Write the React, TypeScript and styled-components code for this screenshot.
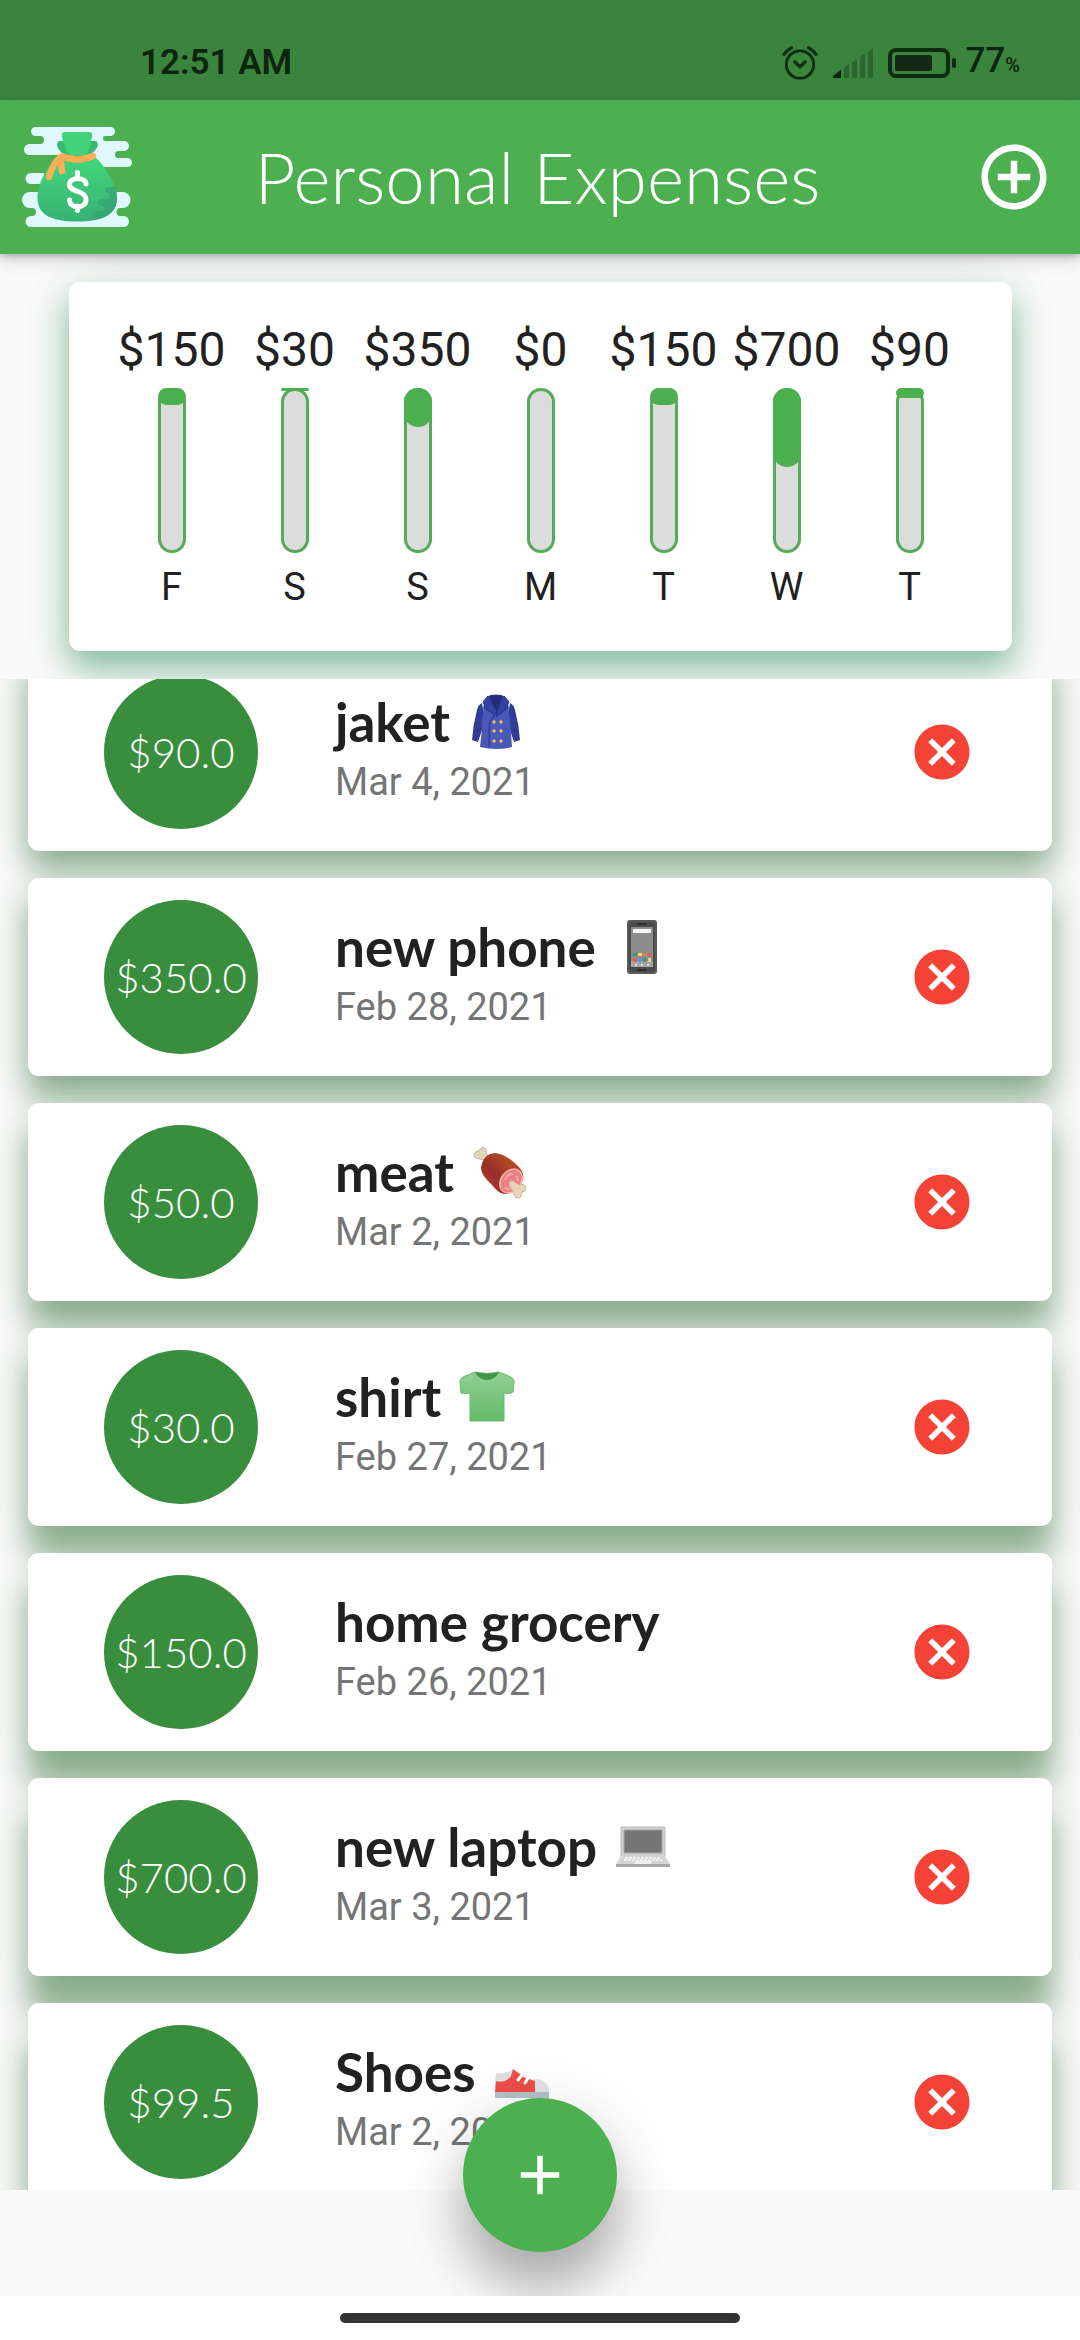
import React, { useLayoutEffect, useRef } from 'react';
import styled, { createGlobalStyle } from 'styled-components';
import { MdAdd, MdAddCircleOutline, MdCancel } from 'react-icons/md';

const GlobalStyle = createGlobalStyle`
  * { box-sizing: border-box; }
  body { margin: 0; background: #ffffff; }
  button { font: inherit; border: 0; padding: 0; cursor: pointer; }
`;

const rounded = "Lato, 'Open Sans', sans-serif";
const plain = "Roboto, 'Noto Sans', sans-serif";

const Screen = styled.div`
  display: flex;
  flex-direction: column;
  height: 100vh;
  overflow: hidden;
  font-family: ${plain};
  color: #212121;
`;

const StatusBar = styled.div`
  display: flex;
  align-items: center;
  flex: none;
  height: 100px;
  padding: 26px 60px 0 140px;
  background: #3b843d;
  color: #0d250f;
  font-size: 35px;
  line-height: 40px;
`;

const Clock = styled.time`
  margin-right: auto;
  font-weight: 600;
`;

const StatusIcons = styled.div`
  display: flex;
  align-items: center;
  gap: 14px;
  margin-right: 7px;
`;

const BatteryLevel = styled.span`
  font-weight: 500;
  small { font-size: 20px; }
`;

const AppBar = styled.header`
  position: relative;
  z-index: 1;
  display: grid;
  grid-template-columns: 1fr auto 1fr;
  align-items: center;
  flex: none;
  height: 154px;
  padding: 0 27px 0 22px;
  background: #4caf50;
  color: #ffffff;
  box-shadow: 0 8px 14px rgba(0, 0, 0, 0.14), 0 2px 6px rgba(0, 0, 0, 0.2);
`;

const AppTitle = styled.h1`
  margin: 0;
  font-family: ${rounded};
  font-size: 71px;
  line-height: 84px;
  font-weight: 300;
`;

const BarButton = styled.button`
  display: flex;
  justify-self: end;
  background: none;
  color: #ffffff;
`;

const Body = styled.main`
  position: relative;
  display: flex;
  flex-direction: column;
  flex: 1;
  min-height: 0;
  overflow: hidden;
  background: #fafafa;
`;

const ChartCard = styled.section`
  display: flex;
  flex: none;
  margin: 28px 68px 28px 69px;
  padding: 41px;
  border-radius: 11px;
  background: #ffffff;
  box-shadow: 0 18px 34px rgba(46, 139, 87, 0.5), 0 4px 44px rgba(46, 139, 87, 0.14);
`;

const Day = styled.div`
  display: flex;
  flex: 1 1 0;
  min-width: 0;
  flex-direction: column;
  align-items: center;
  gap: 11px;
`;

const DayTotal = styled.span`
  font-size: 48px;
  line-height: 54px;
`;

const Bar = styled.div`
  width: 28px;
  height: 165px;
  border-radius: 14px;
  background: #dcdcdc;
  box-shadow: inset 0 0 0 3px #55ab58;
`;

const BarFill = styled.div`
  border-radius: 14px;
  background: #4caf50;
`;

const DayName = styled.span`
  font-size: 38px;
  line-height: 46px;
`;

const Scroller = styled.div`
  flex: 1;
  min-height: 0;
  overflow-y: auto;
  scrollbar-width: none;
`;

const ExpenseList = styled.ul`
  display: flex;
  flex-direction: column;
  gap: 27px;
  margin: 0;
  padding: 14px 28px;
  list-style: none;
`;

const ExpenseCard = styled.li<{ $drop: number }>`
  display: flex;
  align-items: center;
  flex: none;
  height: 198px;
  padding: 0 44px 0 76px;
  border-radius: 11px;
  background: #ffffff;
  box-shadow: 0 ${(p) => p.$drop}px 32px rgba(27, 94, 32, 0.46), 0 4px 44px rgba(27, 94, 32, 0.1);
`;

const Amount = styled.div`
  display: flex;
  align-items: center;
  justify-content: center;
  flex: none;
  width: 154px;
  height: 154px;
  border-radius: 50%;
  background: #388e3c;
  color: #ffffff;
  font-family: ${rounded};
  font-size: 42px;
  font-weight: 300;
`;

const Details = styled.div`
  flex: 1;
  min-width: 0;
  margin-left: 77px;
  line-height: 60px;
`;

const Name = styled.h2`
  display: flex;
  align-items: center;
  gap: 17px;
  margin: 0;
  font-family: ${rounded};
  font-size: 53px;
  font-weight: 700;
`;

const DateText = styled.time`
  display: block;
  color: #757575;
  font-size: 38px;
`;

const DeleteButton = styled.button`
  display: flex;
  align-items: center;
  justify-content: center;
  width: 132px;
  height: 132px;
  background: none;
  color: #f44336;
`;

const Footer = styled.div`
  flex: none;
  height: 106px;
`;

const Fab = styled.button`
  position: absolute;
  bottom: 44px;
  left: calc(50% - 77px);
  display: flex;
  align-items: center;
  justify-content: center;
  width: 154px;
  height: 154px;
  border-radius: 50%;
  background: #4caf50;
  color: #ffffff;
  box-shadow: 0 38px 52px rgba(0, 0, 0, 0.27), 0 10px 80px rgba(0, 0, 0, 0.1);
`;

const NavBar = styled.div`
  display: flex;
  align-items: center;
  justify-content: center;
  flex: none;
  height: 44px;
  background: #ffffff;
`;

const NavHandle = styled.div`
  width: 400px;
  height: 10px;
  border-radius: 5px;
  background: #333333;
`;

const AlarmIcon = () => (
  <svg width="36" height="36" viewBox="0 0 36 36" fill="none" stroke="#0d2c10" strokeLinecap="round">
    <circle cx="18" cy="19.500" r="13.700" strokeWidth="2.800" />
    <path d="M2 9.200C4 6.500 6.500 4.300 9.500 2.600M34 9.200C32 6.500 29.500 4.300 26.500 2.600" strokeWidth="3.200" />
    <path d="M12.800 16.800L18 21.800L23.200 16.800" strokeWidth="3.200" strokeLinejoin="round" />
  </svg>
);

const SignalIcon = () => (
  <svg width="42" height="36" viewBox="0 0 42 36">
    <path d="M1 33V31L9 24.500V33Z" fill="#0d250f" />
    <path d="M12 33V22.500L17 19V33ZM20 33V17.500L25 14V33ZM28 33V12L33 8.500V33ZM36 33V7L41 3V33Z" fill="#2b672e" />
  </svg>
);

const BatteryIcon = () => (
  <svg width="70" height="36" viewBox="0 0 70 36">
    <rect x="2" y="5" width="58" height="26" rx="6" fill="none" stroke="#0d2c10" strokeWidth="4" />
    <rect x="7" y="10" width="37" height="16" rx="2" fill="#142815" />
    <rect x="64" y="13" width="4" height="10" rx="2" fill="#0d2c10" />
  </svg>
);

const MoneyBag = () => (
  <svg width="110" height="100" viewBox="22 127 110 100" role="img" aria-label="Money bag">
    <defs>
      <linearGradient id="bag" x1="0" y1="0" x2="0" y2="1">
        <stop offset="0" stopColor="#43d87b" />
        <stop offset="1" stopColor="#38b274" />
      </linearGradient>
    </defs>
    <g fill="#dff9ff">
      <path d="M35.500 127H110.500A4.500 4.500 0 0 1 110.500 136H105.500A2.500 2.500 0 0 0 105.500 141H124A5 5 0 0 1 124 151H118.500A3.500 3.500 0 0 0 118.500 158H127.500A4.500 4.500 0 0 1 127.500 167H60V155H29.500A5.500 5.500 0 0 1 29.500 144H40A4 4 0 0 0 40 136H35.500A4.500 4.500 0 0 1 35.500 127Z" />
      <path d="M31 173H60V184H31A5.500 5.500 0 0 1 31 173Z" />
      <path d="M30 192H122.500A8 8 0 0 1 122.500 208H120.500A4 4 0 0 0 120.500 216H123.500A5.500 5.500 0 0 1 123.500 227H31A5.500 5.500 0 0 1 31 216H32A4 4 0 0 0 32 208H30A8 8 0 0 1 30 192Z" />
    </g>
    <path d="M50 167V178H44V167Z" fill="#4caf50" />
    <path d="M62 154Q77 161 92 154C103 163 117 184 117 198C117 214 104 221.500 77 221.500C50 221.500 37.500 214 37.500 198C37.500 182 49 163 62 154Z" fill="url(#bag)" />
    <path d="M116 187H108A3 3 0 0 0 108 193H107A3 3 0 0 1 107 199H101A3 3 0 0 0 101 206H103A3 3 0 0 1 103 211H96C91 212 90 219 95 220C110 217 117 210 117 198Q117 193 116 187Z" fill="#36a573" opacity=".8" />
    <path d="M63 141H60C54 142 58 152 66 155Q77 159 88 155C97 152 101 142 95 141H91Z" fill="#36bb70" />
    <path d="M65 132H89Q93 132 92 137Q89 150 87 154Q77 157 68 154Q66 150 62 137Q61 132 65 132Z" fill="#43d47a" />
    <path d="M93 156Q77 163 62 156C54 162 51 169 49 177M61 158Q61 164 62 171" fill="none" stroke="#ffad57" strokeWidth="6.500" strokeLinecap="round" strokeLinejoin="round" />
    <path d="M86 184C86 176.500 69.500 176.500 69.500 184.500C69.500 193 86 189.500 86 200C86 209 69.500 209 69.500 200M77.500 172.500V178M77.500 206V210.500" fill="none" stroke="#ffffff" strokeWidth="5" strokeLinecap="round" />
  </svg>
);

const Coat = () => (
  <svg width="58" height="58" viewBox="0 0 58 58" role="img" aria-label="coat">
    <path d="M15 10Q11 12 10 17Q6 32 5 47L11 49L18 28ZM43 10Q47 12 48 17Q52 32 53 47L47 49L40 28Z" fill="#313c94" />
    <path d="M17 8L23 2Q29 1 35 2L41 8L43 28L45 54Q29 58 13 54Q15 40 15 28Z" fill="#4a59b5" />
    <path d="M22 3Q29 1 36 3L30 18Q25 12 22 3Z" fill="#202b7a" />
    <path d="M21 3L16 9L18 12L17 15L28 22L30 18Q25 13 21 3ZM37 3L42 9L40 12L41 15L29 24L30 17Q34 11 37 3Z" fill="#3542a0" stroke="#26328a" />
    <path d="M28 22Q22 28 22 35V54" fill="none" stroke="#303c98" strokeWidth="1.500" />
    <g fill="#f0bd63">
      <circle cx="27" cy="29" r="1.700" /><circle cx="34" cy="29" r="1.700" />
      <circle cx="27" cy="38" r="1.700" /><circle cx="34" cy="38" r="1.700" />
      <circle cx="27" cy="48" r="1.700" /><circle cx="34" cy="48" r="1.700" />
    </g>
  </svg>
);

const Phone = () => (
  <svg width="58" height="58" viewBox="0 0 58 58" role="img" aria-label="mobile phone">
    <rect x="14" y="2" width="30" height="54" rx="3" fill="#4b4b4b" />
    <rect x="15" y="3" width="28" height="52" rx="2" fill="none" stroke="#6b6b6b" />
    <rect x="18" y="9" width="22" height="40" fill="#8c8c8c" />
    <rect x="18" y="43" width="22" height="6" fill="#a6a6a6" />
    <path d="M24 6H34M24 52H34" stroke="#303030" strokeWidth="2" />
    <rect x="20" y="11" width="18" height="4" fill="#f5f5f5" />
    <path d="M20 35H24V38H20ZM30 40H33V44H30Z" fill="#3d9d68" />
    <path d="M25 35H29V38H25ZM35 40H38V44H35Z" fill="#f5d36b" />
    <path d="M30 35H34V38H30Z" fill="#dd8438" />
    <path d="M35 35H38V38H35ZM20 40H24V44H20Z" fill="#db6262" />
    <path d="M25 40H29V44H25Z" fill="#6a93dc" />
    <path d="M22 47H24M28 47H30M34 47H36" stroke="#dddddd" strokeWidth="2" />
  </svg>
);

const Meat = () => (
  <svg width="58" height="58" viewBox="0 0 58 58" role="img" aria-label="meat on bone">
    <defs>
      <linearGradient id="roast" x1="1" y1="0" x2="0" y2="1">
        <stop offset=".2" stopColor="#b94f25" />
        <stop offset=".6" stopColor="#96302b" />
        <stop offset="1" stopColor="#c53a35" />
      </linearGradient>
    </defs>
    <path d="M16 17L8 16Q2 15 3 11Q4 8 8 8Q10 3 14 5Q16 7 15 11L20 15Z" fill="#e6d3b9" stroke="#c9b498" />
    <path d="M10 25Q12 11 24 10Q35 11 47 23Q55 31 51 39Q45 51 34 51Q28 51 21 42Q10 32 10 25Z" fill="url(#roast)" />
    <ellipse cx="40" cy="38" rx="10" ry="13" transform="rotate(38 40 38)" fill="#f07f85" stroke="#ffb0a8" strokeWidth="1.500" />
    <path d="M34 37Q36 31 42 31M34 44Q36 47 39 46M45 33Q48 36 46 38" fill="none" stroke="#f9a6a8" strokeWidth="2" />
    <path d="M38 41Q38 37 42 38L48 42Q54 40 55 45Q55 49 51 49Q51 55 47 55Q42 55 43 49Q38 44 38 41Z" fill="#e6d3b9" stroke="#c9b498" />
  </svg>
);

const Shirt = () => (
  <svg width="58" height="58" viewBox="0 0 58 58" role="img" aria-label="t-shirt">
    <defs>
      <linearGradient id="cloth" x1="0" y1="0" x2="0" y2="1">
        <stop offset="0" stopColor="#90cf93" />
        <stop offset="1" stopColor="#64bc69" />
      </linearGradient>
    </defs>
    <path d="M17 4Q29 7 41 4L53 9Q57 11 56 15L55 24Q51 27 46 25V53H12V25Q7 26 3 25L2 15Q1 11 5 9Z" fill="url(#cloth)" stroke="#6bb96f" />
    <path d="M17 4Q29 7 41 4Q37 12 29 12Q21 12 17 4Z" fill="#3f9644" />
  </svg>
);

const Laptop = () => (
  <svg width="58" height="58" viewBox="0 0 58 58" role="img" aria-label="laptop">
    <path d="M7 9H51V39H7Z" fill="#cfcfcf" stroke="#bcbcbc" />
    <path d="M10 12H48V35H10Z" fill="#757575" stroke="#aaaaaa" />
    <path d="M7 38H51L56 46V49H2V46Z" fill="#d5d5d5" />
    <path d="M2 46H56V49H2Z" fill="#a9a9a9" />
    <path d="M11 40H47M10 42H48" stroke="#f5f5f5" strokeWidth="1.500" strokeDasharray="3 1" />
    <path d="M21 43H37L38 46H20Z" fill="#efefef" />
  </svg>
);

const Shoe = () => (
  <svg width="58" height="58" viewBox="0 0 58 58" role="img" aria-label="running shoe">
    <path d="M3 30Q9 31 14 29Q18 28 20 26L38 36H44Q56 38 56 49V55H2V39Z" fill="#e2e4e6" />
    <path d="M3 38Q14 39 18 33L20 26L24 29L32 35L42 38V49H2Z" fill="#ec4f48" />
    <path d="M3 31Q9 32 14 29Q19 34 12 38Q6 39 3 38Z" fill="#e0e0e0" />
    <path d="M29 32L25 37M35 35L32 40" stroke="#ffffff" strokeWidth="3" strokeLinecap="round" />
    <path d="M2 49H56V55H2Z" fill="#b6c1c8" />
  </svg>
);

const days = [
  { name: 'F', total: 150 },
  { name: 'S', total: 30 },
  { name: 'S', total: 350 },
  { name: 'M', total: 0 },
  { name: 'T', total: 150 },
  { name: 'W', total: 700 },
  { name: 'T', total: 90 },
];

const weekTotal = days.reduce((sum, day) => sum + day.total, 0);

const expenses = [
  { name: 'jaket', icon: <Coat />, amount: 90, date: 'Mar 4, 2021' },
  { name: 'new phone', icon: <Phone />, amount: 350, date: 'Feb 28, 2021' },
  { name: 'meat', icon: <Meat />, amount: 50, date: 'Mar 2, 2021' },
  { name: 'shirt', icon: <Shirt />, amount: 30, date: 'Feb 27, 2021' },
  { name: 'home grocery', icon: null, amount: 150, date: 'Feb 26, 2021' },
  { name: 'new laptop', icon: <Laptop />, amount: 700, date: 'Mar 3, 2021' },
  { name: 'Shoes', icon: <Shoe />, amount: 99.5, date: 'Mar 2, 2021' },
];

const SCROLL_START = 40;

export default function App() {
  const scroller = useRef<HTMLDivElement>(null);

  useLayoutEffect(() => {
    if (scroller.current) scroller.current.scrollTop = SCROLL_START;
  }, []);

  return (
    <Screen>
      <GlobalStyle />
      <StatusBar>
        <Clock>12:51 AM</Clock>
        <StatusIcons>
          <AlarmIcon />
          <SignalIcon />
          <BatteryIcon />
        </StatusIcons>
        <BatteryLevel>77<small>%</small></BatteryLevel>
      </StatusBar>
      <AppBar>
        <MoneyBag />
        <AppTitle>Personal Expenses</AppTitle>
        <BarButton aria-label="Add expense">
          <MdAddCircleOutline size={78} />
        </BarButton>
      </AppBar>
      <Body>
        <ChartCard>
          {days.map((day, i) => (
            <Day key={i}>
              <DayTotal>${day.total}</DayTotal>
              <Bar>
                <BarFill style={{ height: `${(day.total / weekTotal) * 100}%` }} />
              </Bar>
              <DayName>{day.name}</DayName>
            </Day>
          ))}
        </ChartCard>
        <Scroller ref={scroller}>
          <ExpenseList>
            {expenses.map((item, i) => (
              <ExpenseCard key={item.name} $drop={18 + i * 4}>
                <Amount>${item.amount.toFixed(1)}</Amount>
                <Details>
                  <Name>
                    {item.name}
                    {item.icon}
                  </Name>
                  <DateText>{item.date}</DateText>
                </Details>
                <DeleteButton aria-label={`Delete ${item.name}`}>
                  <MdCancel size={66} />
                </DeleteButton>
              </ExpenseCard>
            ))}
          </ExpenseList>
        </Scroller>
        <Footer />
        <Fab aria-label="Add expense">
          <MdAdd size={66} />
        </Fab>
      </Body>
      <NavBar>
        <NavHandle />
      </NavBar>
    </Screen>
  );
}
